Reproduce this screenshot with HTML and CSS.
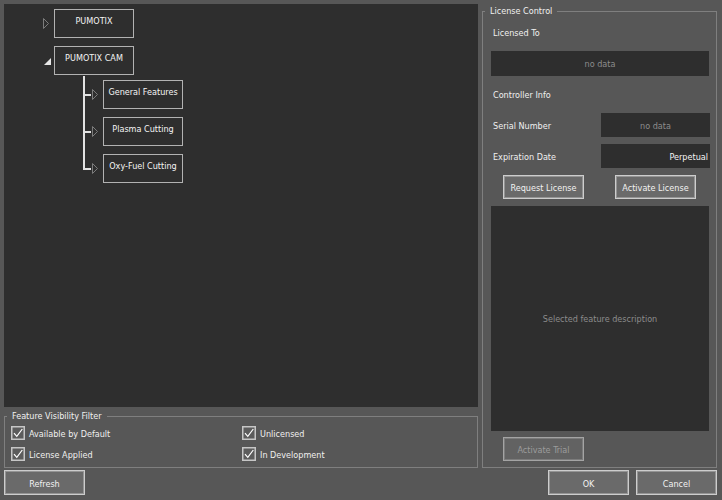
FILE: index.html
```html
<!DOCTYPE html>
<html>
<head>
<meta charset="utf-8">
<title>License Manager</title>
<link rel="stylesheet" href="styles.css">
</head>
<body>
<div class="app">
  <div class="main">
    <div class="left">
      <div class="tree">
        <div class="node-row top">
          <span class="exp"><svg width="6" height="11" viewBox="0 0 6 11"><polygon points="0.5,0.5 5.5,5.5 0.5,10.5" fill="none" stroke="#7c7c7c" stroke-width="1"/></svg></span>
          <div class="node">PUMOTIX</div>
        </div>
        <div class="node-row top second">
          <span class="exp"><svg class="open" width="7" height="7" viewBox="0 0 7 7"><polygon points="7,0 7,7 0,7" fill="#e6e6e6"/></svg></span>
          <div class="node">PUMOTIX CAM</div>
        </div>
        <div class="children">
          <div class="node-row child">
            <span class="stub"></span>
            <span class="exp"><svg width="6" height="11" viewBox="0 0 6 11"><polygon points="0.5,0.5 5.5,5.5 0.5,10.5" fill="none" stroke="#7c7c7c" stroke-width="1"/></svg></span>
            <div class="node">General Features</div>
          </div>
          <div class="node-row child">
            <span class="stub"></span>
            <span class="exp"><svg width="6" height="11" viewBox="0 0 6 11"><polygon points="0.5,0.5 5.5,5.5 0.5,10.5" fill="none" stroke="#7c7c7c" stroke-width="1"/></svg></span>
            <div class="node">Plasma Cutting</div>
          </div>
          <div class="node-row child">
            <span class="stub"></span>
            <span class="exp"><svg width="6" height="11" viewBox="0 0 6 11"><polygon points="0.5,0.5 5.5,5.5 0.5,10.5" fill="none" stroke="#7c7c7c" stroke-width="1"/></svg></span>
            <div class="node">Oxy-Fuel Cutting</div>
          </div>
        </div>
      </div>
      <div class="group filter">
        <span class="group-title">Feature Visibility Filter</span>
        <div class="checks">
          <label class="check"><span class="box"><svg width="14" height="14" viewBox="0 0 14 14"><rect x="0.75" y="0.75" width="12.5" height="12.5" fill="#5c5c5c" stroke="#c6c6c6" stroke-width="1.5"/><path d="M3 7.2 L5.8 10.4 L11.3 3" fill="none" stroke="#ffffff" stroke-width="1.2"/></svg></span><span class="lbl">Available by Default</span></label>
          <label class="check"><span class="box"><svg width="14" height="14" viewBox="0 0 14 14"><rect x="0.75" y="0.75" width="12.5" height="12.5" fill="#5c5c5c" stroke="#c6c6c6" stroke-width="1.5"/><path d="M3 7.2 L5.8 10.4 L11.3 3" fill="none" stroke="#ffffff" stroke-width="1.2"/></svg></span><span class="lbl">Unlicensed</span></label>
          <label class="check"><span class="box"><svg width="14" height="14" viewBox="0 0 14 14"><rect x="0.75" y="0.75" width="12.5" height="12.5" fill="#5c5c5c" stroke="#c6c6c6" stroke-width="1.5"/><path d="M3 7.2 L5.8 10.4 L11.3 3" fill="none" stroke="#ffffff" stroke-width="1.2"/></svg></span><span class="lbl">License Applied</span></label>
          <label class="check"><span class="box"><svg width="14" height="14" viewBox="0 0 14 14"><rect x="0.75" y="0.75" width="12.5" height="12.5" fill="#5c5c5c" stroke="#c6c6c6" stroke-width="1.5"/><path d="M3 7.2 L5.8 10.4 L11.3 3" fill="none" stroke="#ffffff" stroke-width="1.2"/></svg></span><span class="lbl">In Development</span></label>
        </div>
      </div>
    </div>
    <div class="group license">
      <span class="group-title">License Control</span>
      <div class="lic-label first">Licensed To</div>
      <div class="field wide">no data</div>
      <div class="lic-label second">Controller Info</div>
      <div class="kv">
        <span class="lbl">Serial Number</span>
        <div class="field small">no data</div>
      </div>
      <div class="kv next">
        <span class="lbl">Expiration Date</span>
        <div class="field small value">Perpetual</div>
      </div>
      <div class="btn-row">
        <button class="btn">Request License</button>
        <button class="btn">Activate License</button>
      </div>
      <div class="desc">Selected feature description</div>
      <div class="trial-row">
        <button class="btn disabled">Activate Trial</button>
      </div>
    </div>
  </div>
  <div class="footer">
    <button class="btn big">Refresh</button>
    <button class="btn big ok">OK</button>
    <button class="btn big cancel">Cancel</button>
  </div>
</div>
</body>
</html>
```

FILE: styles.css
```css
html, body {
  margin: 0;
  padding: 0;
}
body {
  width: 722px;
  height: 500px;
  overflow: hidden;
  background: #575757;
  color: #f0f0f0;
  font-family: "DejaVu Sans Condensed", "DejaVu Sans", sans-serif;
  font-size: 9px;
}
.app {
  padding: 4px 5px 0 4px;
  display: flex;
  flex-direction: column;
}
.main {
  display: flex;
  gap: 4px;
  height: 464px;
}
.left {
  width: 474px;
  display: flex;
  flex-direction: column;
}
.tree {
  height: 403px;
  box-sizing: border-box;
  background: #2e2e2e;
  padding-top: 5px;
}
.node-row {
  display: flex;
  align-items: center;
}
.node-row.top {
  padding-left: 39px;
}
.node-row.second {
  margin-top: 8px;
}
.exp {
  width: 11px;
  display: flex;
  align-items: center;
}
.exp svg {
  display: block;
}
.exp svg.open {
  margin-left: 1px;
  margin-top: 1px;
}
.node {
  width: 80px;
  height: 29px;
  box-sizing: border-box;
  border: 1px solid #b2b2b2;
  background: #2e2e2e;
  text-align: center;
  padding-top: 5px;
  line-height: 12px;
  color: #f4f4f4;
  white-space: nowrap;
}
.children {
  position: relative;
  margin-left: 79px;
  margin-top: 5px;
}
.children::before {
  content: "";
  position: absolute;
  left: 0;
  top: -4px;
  width: 2px;
  height: 94px;
  background: #e2e2e2;
}
.node-row.child + .node-row.child {
  margin-top: 8px;
}
.stub {
  width: 8px;
  height: 2px;
  background: #e2e2e2;
}
.node-row.child .exp {
  width: 12px;
}
.node-row.child .exp svg {
  margin-left: 1px;
}
.group {
  position: relative;
  border: 1px solid #7f7f7f;
  box-sizing: border-box;
}
.group-title {
  position: absolute;
  top: -7px;
  left: 2px;
  padding: 0 5px 0 5px;
  line-height: 13px;
  background: #575757;
  color: #f0f0f0;
  white-space: nowrap;
}
.filter {
  margin-top: 9px;
  height: 52px;
}
.checks {
  display: grid;
  grid-template-columns: 231px 1fr;
  row-gap: 7px;
  padding: 9px 0 0 6px;
}
.check {
  display: flex;
  align-items: center;
  gap: 4px;
  height: 14px;
  white-space: nowrap;
}
.lbl {
  padding-top: 2px;
}
.box svg {
  display: block;
}
.license {
  margin-top: 7px;
  width: 235px;
  height: 457px;
  display: flex;
  flex-direction: column;
}
.lic-label {
  padding-left: 10px;
}
.lic-label.first {
  height: 39px;
  line-height: 42px;
}
.lic-label.second {
  height: 37px;
  line-height: 39px;
}
.field {
  background: #2e2e2e;
  color: #8c8c8c;
  text-align: center;
  box-sizing: border-box;
}
.field.wide {
  margin: 0 7px 0 8px;
  height: 25px;
  line-height: 26px;
}
.kv {
  display: flex;
  align-items: center;
  justify-content: space-between;
  height: 24px;
  padding: 0 6px 0 10px;
}
.kv.next {
  margin-top: 7px;
}
.field.small {
  width: 109px;
  height: 24px;
  line-height: 26px;
}
.field.value {
  color: #f4f4f4;
  text-align: right;
  padding-right: 2px;
}
.btn-row {
  margin-top: 7px;
  display: flex;
  gap: 31px;
  padding-left: 20px;
}
.btn {
  width: 81px;
  height: 24px;
  box-sizing: border-box;
  margin: 0;
  padding: 2px 0 0 0;
  border: 1px solid #cdcdcd;
  box-shadow: inset 0 0 0 1px #949494;
  background: #6a6a6a;
  color: #f2f2f2;
  font-family: inherit;
  font-size: 9px;
  text-align: center;
}
.btn.disabled {
  border-color: #a4a4a4;
  box-shadow: inset 0 0 0 1px #7c7c7c;
  background: #626262;
  color: #9c9c9c;
}
.desc {
  margin: 7px 7px 0 8px;
  height: 225px;
  background: #2e2e2e;
  color: #8c8c8c;
  display: flex;
  align-items: center;
  justify-content: center;
}
.trial-row {
  margin-top: 6px;
  padding-left: 20px;
}
.footer {
  display: flex;
  margin-top: 2px;
}
.btn.big {
  height: 25px;
}
.btn.ok {
  margin-left: auto;
}
.btn.cancel {
  margin-left: 7px;
}
```
